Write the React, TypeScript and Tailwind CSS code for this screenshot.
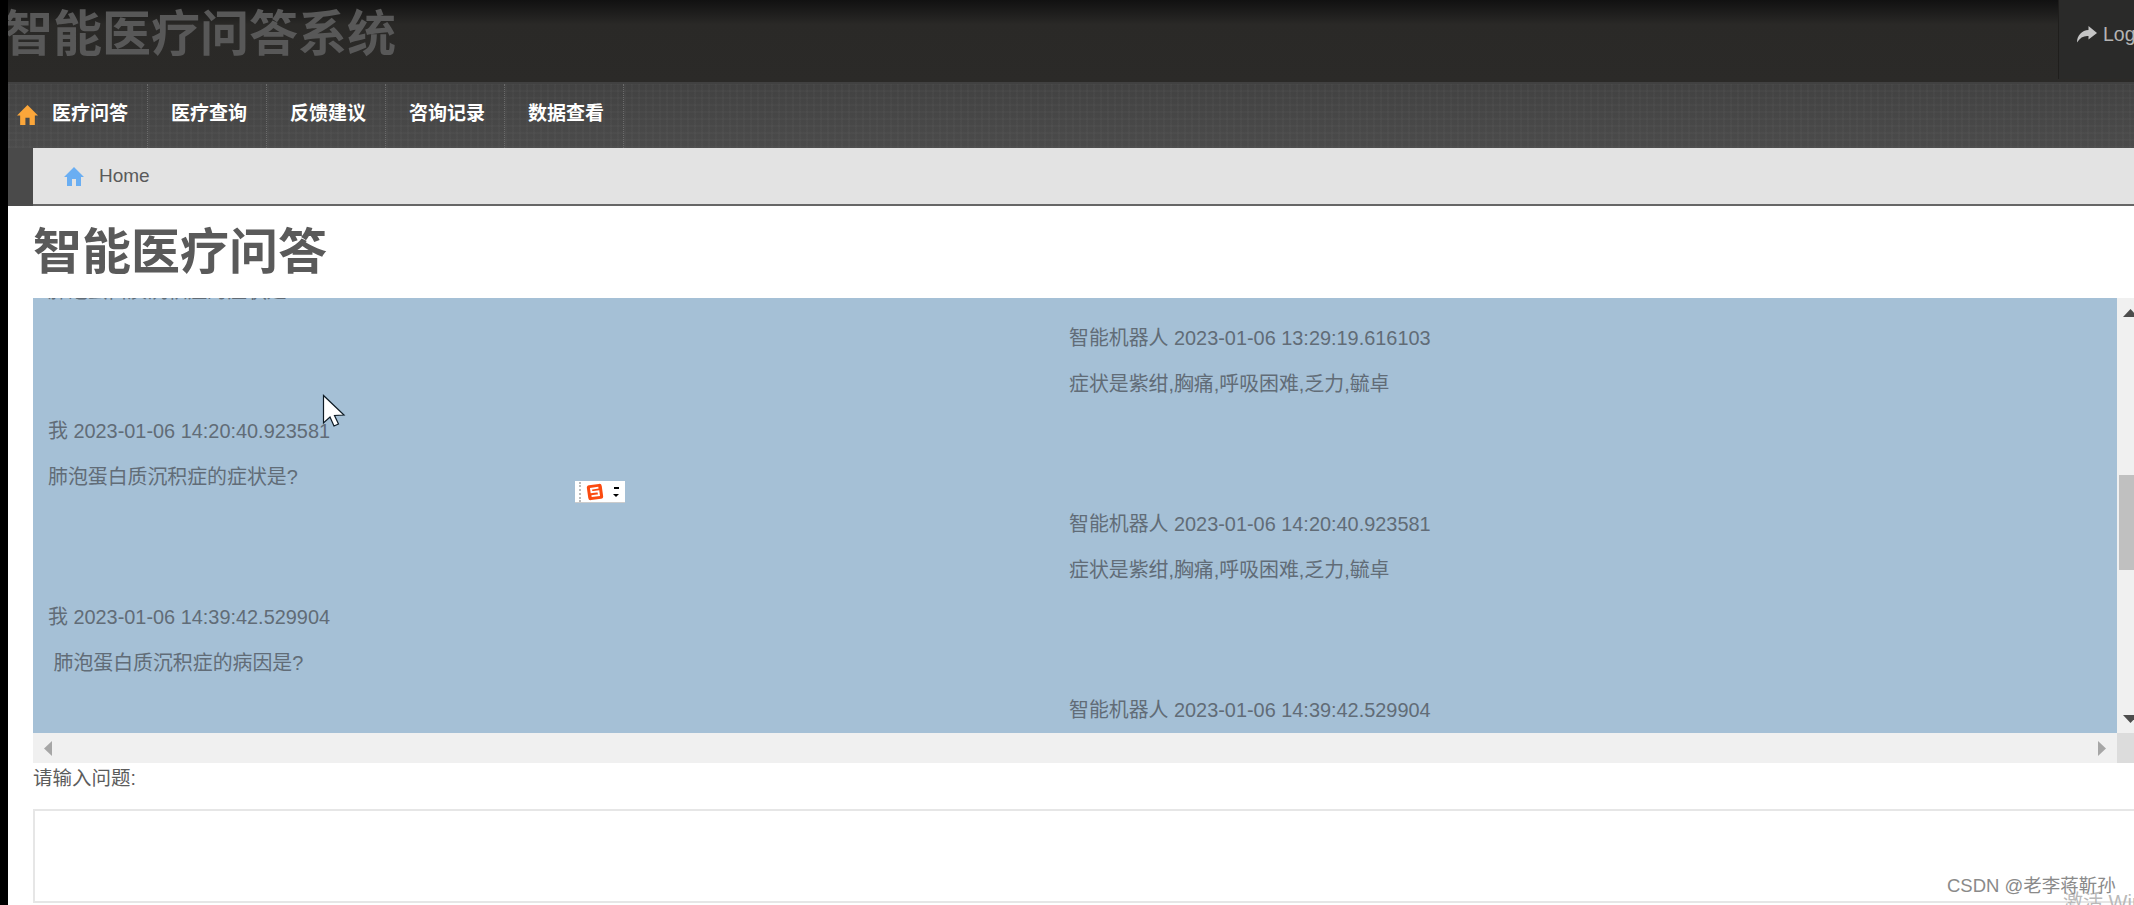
function HomeIcon({ color, size }: { color: string; size: number }) {
  return (
    <svg width={size} height={size} viewBox="0 0 20 20" className="shrink-0">
      <path d="M10 1 L20 11 L17 11 L17 20 L12 20 L12 13 L8 13 L8 20 L3 20 L3 11 L0 11 Z" fill={color} />
    </svg>
  );
}

const navItems = ["医疗问答", "医疗查询", "反馈建议", "咨询记录", "数据查看"];

type Row = { side: "l" | "r"; text: string };
const rows: Row[] = [
  { side: "l", text: "肺泡蛋白质沉积症的症状是?" },
  { side: "r", text: "智能机器人 2023-01-06 13:29:19.616103" },
  { side: "r", text: "症状是紫绀,胸痛,呼吸困难,乏力,毓卓" },
  { side: "l", text: "我 2023-01-06 14:20:40.923581" },
  { side: "l", text: "肺泡蛋白质沉积症的症状是?" },
  { side: "r", text: "智能机器人 2023-01-06 14:20:40.923581" },
  { side: "r", text: "症状是紫绀,胸痛,呼吸困难,乏力,毓卓" },
  { side: "l", text: "我 2023-01-06 14:39:42.529904" },
  { side: "l", text: "\u00a0肺泡蛋白质沉积症的病因是?" },
  { side: "r", text: "智能机器人 2023-01-06 14:39:42.529904" },
];

export default function App() {
  return (
    <div className="relative flex h-[905px] w-[2134px] overflow-hidden bg-black font-['Liberation_Sans','Noto_Sans_CJK_SC',sans-serif]">
      <div className="w-2 shrink-0 bg-black" />
      <div className="flex min-w-0 flex-1 flex-col bg-white">
        {/* top header */}
        <header className="flex h-[82px] shrink-0 items-start justify-between overflow-hidden bg-gradient-to-b from-[#111111] from-0% via-[#2a2927] via-30% to-[#2b2a28]">
          <h1 className="-ml-[4px] mt-[7px] whitespace-nowrap text-[49px] font-bold leading-[54px] text-[#585858]">
            智能医疗问答系统
          </h1>
          <div className="flex h-[79px] w-[76px] shrink-0 items-center gap-[6px] overflow-hidden border-l border-[#1f1e1c] bg-[#2a2a29] pb-[10px] pl-[18px]">
            <svg width="20" height="17" viewBox="0 0 20 17" className="shrink-0">
              <path d="M11.5 0 L20 7 L11.5 13.5 L11.5 10 C7 9.5 3 11.5 0 16.5 C0 9 5 4.5 11.5 4 Z" fill="#c4c4c4" />
            </svg>
            <span className="text-[19.5px] text-[#b4b4b4]">Logout</span>
          </div>
        </header>

        {/* nav */}
        <nav className="flex h-[66px] shrink-0 items-stretch border-t-2 border-[#414141] bg-[#464646] bg-[repeating-linear-gradient(90deg,rgba(255,255,255,0.02)_0px,rgba(255,255,255,0.02)_2px,transparent_2px,transparent_7px),repeating-linear-gradient(0deg,rgba(255,255,255,0.02)_0px,rgba(255,255,255,0.02)_2px,transparent_2px,transparent_7px),linear-gradient(180deg,#424242,#4b4b4b)]">
          <div className="flex w-[140px] shrink-0 items-center border-r border-dotted border-[#6a6a6a] pb-[4px] pl-[9px]">
            <HomeIcon color="#fba63a" size={21} />
            <span className="ml-[14px] text-[19px] font-bold text-white">{navItems[0]}</span>
          </div>
          {navItems.slice(1).map((t) => (
            <div
              key={t}
              className="flex w-[119px] shrink-0 items-center border-r border-dotted border-[#6a6a6a] pb-[4px] pl-[23px]"
            >
              <span className="text-[19px] font-bold text-white">{t}</span>
            </div>
          ))}
        </nav>

        {/* breadcrumb */}
        <div className="flex shrink-0 bg-[#4a4a4a]">
          <div className="ml-[25px] flex h-[58px] flex-1 items-center gap-[15px] border-b-2 border-[#666666] bg-[#e3e3e3] pl-[31px]">
            <HomeIcon color="#6aaef2" size={20} />
            <span className="text-[19px] text-[#5a5a5a]">Home</span>
          </div>
        </div>

        {/* page */}
        <main className="flex min-h-0 flex-1 flex-col pl-[25px]">
          <h2 className="h-[92px] shrink-0 whitespace-nowrap pt-[17px] text-[49px] font-bold leading-[58px] text-[#5a5a5a]">
            智能医疗问答
          </h2>

          <div className="flex h-[435px] shrink-0">
            <div className="w-[2084px] shrink-0 overflow-hidden bg-[#a5c0d6] text-[19.9px] text-[#616c77]">
              <div className="-mt-[29px]">
                {rows.map((r, i) => (
                  <div
                    key={i}
                    className={`flex h-[46.5px] items-center whitespace-nowrap ${
                      r.side === "l" ? "pl-[15px]" : "pl-[1036px]"
                    }`}
                  >
                    {r.text}
                  </div>
                ))}
              </div>
            </div>
            <div className="flex flex-1 flex-col items-center justify-between bg-[#f0f0f0] pb-[10px] pl-[6px] pt-[11px]">
              <svg width="15" height="8" viewBox="0 0 15 8">
                <path d="M7.5 0 L15 8 L0 8 Z" fill="#4d4d4d" />
              </svg>
              <svg width="15" height="8" viewBox="0 0 15 8">
                <path d="M0 0 L15 0 L7.5 8 Z" fill="#4d4d4d" />
              </svg>
            </div>
          </div>

          <div className="flex h-[30px] shrink-0">
            <div className="flex w-[2084px] shrink-0 items-center justify-between bg-[#f0f0f0] px-[11px]">
              <svg width="8" height="15" viewBox="0 0 8 15">
                <path d="M8 0 L8 15 L0 7.5 Z" fill="#a6a6a6" />
              </svg>
              <svg width="8" height="15" viewBox="0 0 8 15">
                <path d="M0 0 L0 15 L8 7.5 Z" fill="#a6a6a6" />
              </svg>
            </div>
            <div className="flex-1 bg-[#dcdcdc]" />
          </div>

          <label className="mt-[3px] block h-[43px] shrink-0 text-[19.5px] leading-[24px] text-[#5c5c5c]">
            请输入问题:
          </label>
          <div className="-mr-[20px] h-[94px] shrink-0 border-2 border-[#e6e6e6] bg-white" />
        </main>
      </div>

      {/* scrollbar thumb */}
      <div className="absolute left-[2119px] top-[475px] h-[95px] w-[15px] bg-[#c0c0c0]" />

      {/* mouse pointer */}
      <svg className="absolute left-[322px] top-[394px]" width="24" height="34" viewBox="0 0 24 34">
        <path d="M1.5 1.5 L1.5 29 L8 23 L12 32 L16.5 30 L12.5 21.5 L22 21 Z" fill="#ffffff" stroke="#0d1a24" strokeWidth="1.2" />
      </svg>

      {/* IME status widget */}
      <div className="absolute left-[575px] top-[481px] flex h-[22px] w-[50px] items-center border-b border-[#cccccc] bg-white">
        <div className="ml-[4px] h-[20px] border-l-2 border-dotted border-[#bbbbbb]" />
        <svg width="18" height="18" viewBox="0 0 18 18" className="ml-[5px]">
          <g transform="rotate(-8 9 9)">
            <rect x="1.5" y="1.5" width="15" height="15" rx="2.5" fill="#fb4a0f" />
            <path d="M13 5.2 H5.5 V8.8 H12.5 V12.6 H5" fill="none" stroke="#ffffff" strokeWidth="1.9" />
          </g>
        </svg>
        <div className="ml-[9px] flex flex-col items-center gap-[5px]">
          <div className="h-[2px] w-[5px] bg-black" />
          <div className="h-0 w-0 border-x-[3px] border-t-[3px] border-x-transparent border-t-black" />
        </div>
      </div>

      {/* activation + watermark */}
      <div className="absolute left-[2063px] top-[890px] whitespace-nowrap text-[20px] leading-[24px] text-[#b9b9b9]">
        激活 Windows
      </div>
      <div className="absolute left-[1947px] top-[874px] whitespace-nowrap text-[18.5px] leading-[24px] text-[#8a8a8a]">
        CSDN @老李蒋靳孙
      </div>
    </div>
  );
}
